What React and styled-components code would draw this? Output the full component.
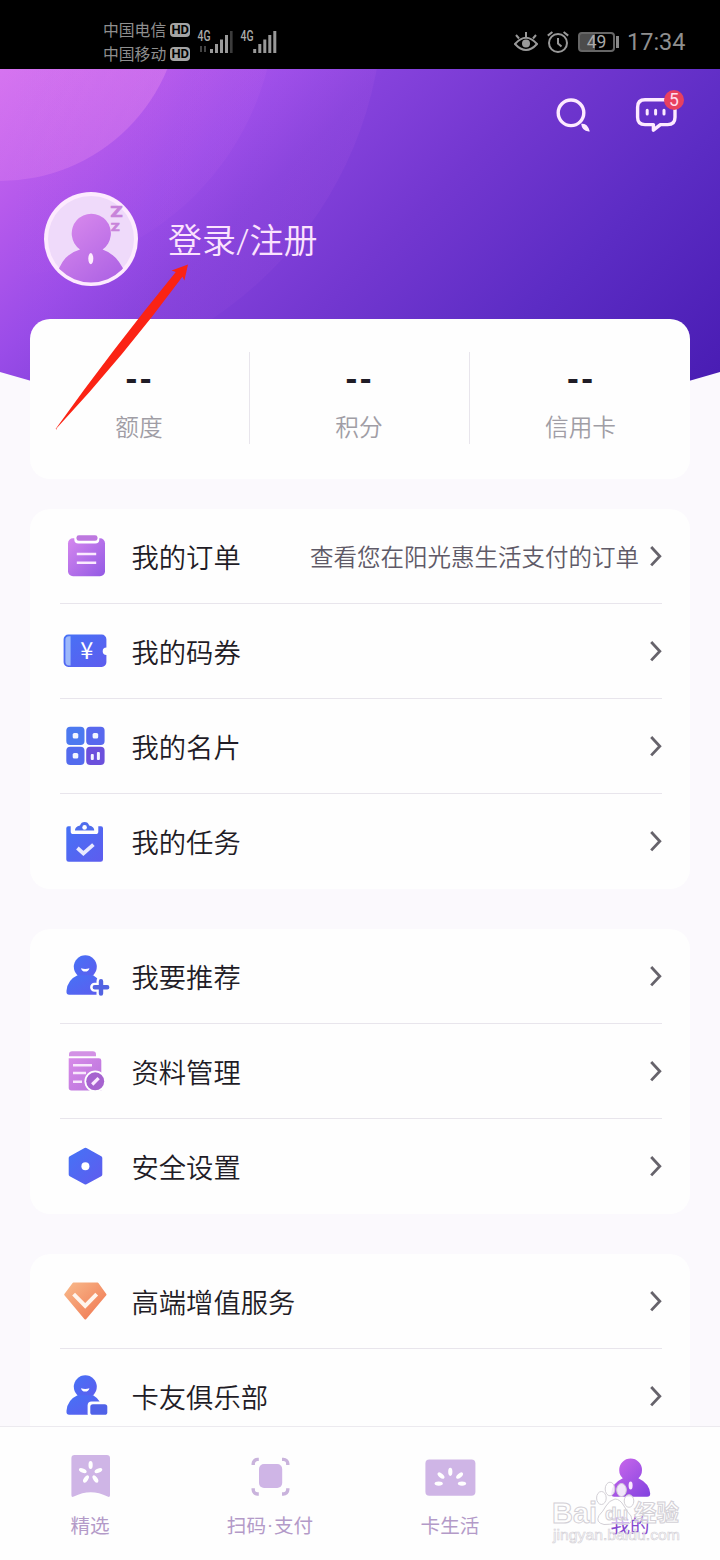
import React from 'react';
import styled, { createGlobalStyle } from 'styled-components';

const theme = {
  colors: {
    page: '#fbf9fd',
    surface: '#fefefe',
    text: '#1f1c26',
    textMuted: '#a09da5',
    textSoft: '#5f5a67',
    border: '#e8e5ec',
    tab: '#b39ac8',
    tabIcon: '#cfb5e6',
    tabActive: '#8548cf',
    status: '#8f8f8f',
    badge: '#e8405f'
  },
  fonts: {
    primary: '"Noto Sans CJK SC", sans-serif',
    latin: 'Roboto, "Noto Sans CJK SC", sans-serif'
  }
};

const GlobalStyle = createGlobalStyle`
  * {
    box-sizing: border-box;
  }

  body {
    margin: 0;
    background: ${theme.colors.page};
    font-family: ${theme.fonts.primary};
    font-weight: 350;
    color: ${theme.colors.text};
  }

  svg {
    display: block;
    flex: none;
  }
`;

const Screen = styled.div`
  position: relative;
  width: 720px;
  height: 1560px;
  overflow: hidden;
  display: flex;
  flex-direction: column;
  background: ${theme.colors.page};
`;

const StatusBar = styled.div`
  height: 69px;
  flex: none;
  background: #000;
  color: ${theme.colors.status};
  display: flex;
  align-items: center;
  justify-content: space-between;
  padding: 14px 35px 0 103px;
`;

const StatusGroup = styled.div`
  display: flex;
  align-items: center;
`;

const StatusIcons = styled.div`
  display: flex;
  align-items: center;
  gap: 9px;
`;

const Carriers = styled.div`
  display: flex;
  flex-direction: column;
  margin-right: 6px;
`;

const Carrier = styled.div`
  display: flex;
  align-items: center;
  gap: 4px;
  height: 24px;
  font-size: 15.8px;
  font-weight: 400;
  line-height: 24px;
  white-space: nowrap;
`;

const HdTag = styled.span`
  width: 20px;
  height: 14px;
  border-radius: 4px;
  background: #a4a4a4;
  color: #000;
  font-family: ${theme.fonts.latin};
  font-size: 13px;
  font-weight: 700;
  line-height: 14px;
  text-align: center;
`;

const Battery = styled.div`
  position: relative;
  width: 37px;
  height: 20px;
  margin: 0 12px 0 9px;
  border: 2px solid #666;
  border-radius: 4px;
  background: linear-gradient(90deg, #4c4c4c 0 45%, #000 45%);
  font-family: ${theme.fonts.latin};
  font-size: 17.5px;
  font-weight: 400;
  line-height: 17px;
  color: #aaa;
  text-align: center;

  &::after {
    content: '';
    position: absolute;
    right: -6px;
    top: 2px;
    width: 3px;
    height: 12px;
    background: #888;
  }
`;

const Clock = styled.span`
  width: 58px;
  padding-top: 1px;
  font-family: ${theme.fonts.latin};
  font-size: 23.5px;
  font-weight: 400;
  line-height: 28px;
  white-space: nowrap;
`;

const Header = styled.header`
  position: relative;
  height: 250px;
  flex: none;
  padding: 24px 36px 0 44px;
`;

const Backdrop = styled.svg`
  position: absolute;
  left: 0;
  top: 0;
`;

const Toolbar = styled.div`
  position: relative;
  display: flex;
  justify-content: flex-end;
  gap: 42px;
  height: 44px;
`;

const MessageButton = styled.div`
  position: relative;
  width: 50px;
`;

const Badge = styled.span`
  position: absolute;
  top: -3px;
  left: 30px;
  width: 20px;
  height: 20px;
  border-radius: 50%;
  background: ${theme.colors.badge};
  color: #fde;
  font-family: ${theme.fonts.latin};
  font-size: 17.5px;
  font-weight: 400;
  line-height: 21px;
  text-align: center;
`;

const Profile = styled.div`
  position: relative;
  display: flex;
  align-items: center;
  gap: 30px;
  margin-top: 55px;
  height: 94px;
`;

const LoginText = styled.div`
  padding-top: 4px;
  color: #fbe3fd;
  font-family: ${theme.fonts.latin};
  font-size: 34px;
  line-height: 50px;
`;

const StatsCard = styled.section`
  position: relative;
  display: grid;
  grid-template-columns: repeat(3, 1fr);
  height: 160px;
  flex: none;
  margin: 0 30px 30px;
  padding: 33px 0;
  border-radius: 20px;
  background: ${theme.colors.surface};
`;

const Stat = styled.div`
  display: flex;
  flex-direction: column;
  align-items: center;
  height: 92px;
  padding: 6px 2px 0 0;
  border-right: 1px solid ${theme.colors.border};

  &:last-child {
    border-right: 0;
    padding-right: 0;
  }
`;

const StatValue = styled.div`
  height: 36px;
  padding-left: 2px;
  font-size: 32px;
  font-weight: 900;
  line-height: 36px;
  letter-spacing: 2px;
`;

const StatLabel = styled.div`
  margin-top: 14px;
  padding-left: 1px;
  color: ${theme.colors.textMuted};
  font-size: 23.7px;
  line-height: 36px;
`;

const Menu = styled.section`
  flex: none;
  margin: 0 30px 40px;
  padding: 0 28px 0 30px;
  border-radius: 20px;
  background: ${theme.colors.surface};
`;

const MenuRow = styled.div`
  display: flex;
  align-items: center;
  height: 95px;
  border-bottom: 1px solid ${theme.colors.border};

  &:last-child {
    border-bottom-color: transparent;
  }
`;

const MenuLabel = styled.div`
  flex: 1;
  margin-left: 21.5px;
  padding-bottom: 1px;
  font-size: 27.3px;
  line-height: 40px;
  white-space: nowrap;
`;

const MenuHint = styled.div`
  margin-right: 11px;
  color: ${theme.colors.textSoft};
  font-size: 23.5px;
  line-height: 36px;
  white-space: nowrap;
`;

const TabBar = styled.nav`
  position: absolute;
  left: 0;
  right: 0;
  bottom: 0;
  height: 134px;
  display: grid;
  grid-template-columns: repeat(4, 1fr);
  padding-top: 19px;
  border-top: 1px solid #eceaef;
  background: ${theme.colors.surface};
`;

const Tab = styled.div`
  display: flex;
  flex-direction: column;
  align-items: center;
  gap: 6px;
  color: ${props => (props.$active ? theme.colors.tabActive : theme.colors.tab)};
  font-family: ${theme.fonts.latin};
  font-size: 19.6px;
  font-weight: 400;
  line-height: 30px;
`;

const TabDot = styled.span`
  display: inline-block;
  width: 8px;
  text-align: center;
`;

const Arrow = styled.svg`
  position: absolute;
  left: 50px;
  top: 258px;
`;

const Watermark = styled.svg`
  position: absolute;
  left: 545px;
  top: 1475px;
`;

const HiddenDefs = styled.svg`
  position: absolute;
`;

const Gradients = () => (
  <HiddenDefs width="0" height="0">
    <defs>
      <linearGradient id="violet" x1="0" y1="0" x2="1" y2="1">
        <stop offset="0" stopColor="#d587ee" />
        <stop offset="1" stopColor="#9359e4" />
      </linearGradient>
      <linearGradient id="profile" x1="0" y1="0" x2="1" y2="1">
        <stop offset="0" stopColor="#d78ae8" />
        <stop offset="1" stopColor="#b873dc" />
      </linearGradient>
      <linearGradient id="indigo" x1="0" y1="0" x2="1" y2="1">
        <stop offset="0" stopColor="#4672f6" />
        <stop offset="1" stopColor="#5e5cee" />
      </linearGradient>
      <linearGradient id="orange" x1="0" y1="0" x2="1" y2="1">
        <stop offset="0" stopColor="#f8b98a" />
        <stop offset="1" stopColor="#f0744f" />
      </linearGradient>
      <linearGradient id="active" x1="0" y1="0" x2="1" y2="1">
        <stop offset="0" stopColor="#cf6aec" />
        <stop offset="1" stopColor="#8142df" />
      </linearGradient>
    </defs>
  </HiddenDefs>
);

const OrderIcon = () => (
  <>
    <rect x="8" y="7.3" width="37" height="38" rx="5" fill="url(#violet)" />
    <path d="M14.3 5v3.5a4 4 0 0 0 4 4h17a4 4 0 0 0 4-4V5z" fill="#fff" />
    <rect x="16.5" y="4.2" width="21" height="5.6" rx="2.4" fill="#bd78df" />
    <path d="M16.8 23h19.4M16.8 31.8h19.4" stroke="#fbeaff" strokeWidth="2.6" />
  </>
);

const CouponIcon = () => (
  <>
    <path
      d="M8.3 8.5h33.4a4.7 4.7 0 0 1 4.7 4.7v8.3a3.7 3.7 0 0 0 0 7.4v7.4a4.7 4.7 0 0 1-4.7 4.7H8.3a4.7 4.7 0 0 1-4.7-4.7V13.2a4.7 4.7 0 0 1 4.7-4.7z"
      fill="url(#indigo)"
    />
    <path d="M10.6 10.2v29.2H9a3.6 3.6 0 0 1-3.6-3.6V13.8A3.6 3.6 0 0 1 9 10.2z" fill="#9db8fa" />
    <text x="26.8" y="33.2" fontFamily="Noto Sans CJK SC" fontSize="23.5" fontWeight="400" textAnchor="middle" fill="#fff">
      ¥
    </text>
  </>
);

const CardIcon = () => (
  <>
    <rect x="6.3" y="5.8" width="18.2" height="18.2" rx="4" fill="#4c79f0" />
    <rect x="26.2" y="5.8" width="18.4" height="18.2" rx="4" fill="#5868ee" />
    <rect x="6.3" y="25.7" width="18.2" height="18.2" rx="4" fill="#536bee" />
    <rect x="26.2" y="25.7" width="18.4" height="18.2" rx="4" fill="#6b50dc" />
    <g fill="#f3f5ff">
      <rect x="12.7" y="12" width="5.6" height="5.6" rx="1.6" />
      <rect x="32.6" y="12" width="5.6" height="5.6" rx="1.6" />
      <rect x="12.7" y="32" width="5.6" height="5.6" rx="1.6" />
      <rect x="30.8" y="33" width="3" height="6" rx="1" />
      <rect x="36.9" y="31" width="3" height="8" rx="1" />
    </g>
  </>
);

const TaskIcon = () => (
  <>
    <path
      d="M6.3 12.2q0-2 2-2h2.4v5.2q0 2.6 2.6 2.6h22.4q2.6 0 2.6-2.6v-5.2h2.7q2 0 2 2v31.2q0 2.4-2.4 2.4H8.7q-2.4 0-2.4-2.4z"
      fill="url(#indigo)"
    />
    <path d="M15 14.6q-.4-3.8 5-5.2 1.2-3.4 4.6-3.4t4.6 3.4q5.4 1.4 5 5.2z" fill="#4f6ded" />
    <circle cx="24.6" cy="11.4" r="2.3" fill="#fff" />
    <path d="M17.4 32l6 5.4 10-8.8" fill="none" stroke="#e8e9ff" strokeWidth="3.8" />
  </>
);

const Person = () => (
  <>
    <circle cx="25.3" cy="15.8" r="11.5" fill="url(#indigo)" />
    <path d="M17.5 24.2h15.6q8 4.6 8.6 14 0 5.6-3 5.6H9.3q-3.3 0-2.8-4 .8-11 11-15.6z" fill="url(#indigo)" />
    <path d="M21 17.2q4.2 1.4 8.4 0-.8 3.4-4.2 3.4t-4.2-3.4z" fill="#fff" />
  </>
);

const ReferIcon = () => (
  <>
    <Person />
    <path d="M41 30v17M34.6 36.3h14" stroke="#fefefe" strokeWidth="9" strokeLinecap="round" />
    <path d="M41 30.2v12.4M34.8 36.3h12.4" stroke="#5263e2" strokeWidth="4.4" strokeLinecap="round" />
  </>
);

const ProfileIcon = () => (
  <>
    <path d="M9 10.2V8.4a3.2 3.2 0 0 1 3.2-3.2h20.6a3.2 3.2 0 0 1 3.2 3.2v1.8z" fill="#d391e5" />
    <path d="M8.7 12.2h30.2a2.4 2.4 0 0 1 2.4 2.4v29.9H11.4a2.7 2.7 0 0 1-2.7-2.7z" fill="url(#profile)" />
    <path d="M13 19.3h19M13 27h13M13 35.8h9" stroke="#f8e6fc" strokeWidth="2.6" />
    <circle cx="35.2" cy="35.3" r="10.8" fill="#fefefe" />
    <circle cx="35.2" cy="35.3" r="9" fill="#a663cf" />
    <path d="M32.2 38.5l6.4-6.4" stroke="#fbe9ff" strokeWidth="3.2" />
  </>
);

const SecurityIcon = () => (
  <>
    <path
      d="M25.5 8.8l14.8 8.1v16.6l-14.8 8.1-14.8-8.1V16.9z"
      fill="url(#indigo)"
      stroke="url(#indigo)"
      strokeWidth="4"
      strokeLinejoin="round"
    />
    <circle cx="25.4" cy="25.2" r="4" fill="#fff" />
  </>
);

const DiamondIcon = () => (
  <>
    <path
      d="M13.4 7.6h24.2l7.9 10.9-20.2 24L5.2 18.5z"
      fill="url(#orange)"
      stroke="url(#orange)"
      strokeWidth="2"
      strokeLinejoin="round"
    />
    <path d="M13.6 18.2l11.6 11.6 11.5-11.6" fill="none" stroke="#fff4ec" strokeWidth="4" />
  </>
);

const ClubIcon = () => (
  <>
    <Person />
    <rect x="27.6" y="30.5" width="22" height="16" rx="4" fill="#fefefe" />
    <rect x="30.3" y="33.2" width="17" height="10.6" rx="2.6" fill="#5062e8" />
  </>
);

const Petal = ({ x, y, rotate = 0 }) => (
  <ellipse cx={x} cy={y} rx="2.1" ry="4.1" fill="#fff" transform={`rotate(${rotate} ${x} ${y})`} />
);

const FeaturedIcon = () => (
  <>
    <path
      d="M14.6 9h32.2a3.2 3.2 0 0 1 3.2 3.2v37q0 2.4-2.4 1.4Q39 46.2 30.7 46.2T13.8 50.6q-2.4 1-2.4-1.4v-37A3.2 3.2 0 0 1 14.6 9z"
      fill={theme.colors.tabIcon}
    />
    <Petal x={30.6} y={19} />
    <Petal x={22.8} y={24.6} rotate={-66} />
    <Petal x={38.4} y={24.6} rotate={66} />
    <Petal x={26} y={33} rotate={34} />
    <Petal x={35.4} y={33} rotate={-34} />
  </>
);

const ScanIcon = () => (
  <>
    <rect x="19" y="18" width="23.2" height="24" rx="5" fill={theme.colors.tabIcon} />
    <path
      d="M13.2 19v-1.2a4.4 4.4 0 0 1 4.4-4.4h1.2M42 13.4h1.4a4.4 4.4 0 0 1 4.4 4.4V19M47.8 42.2v1.4a4.4 4.4 0 0 1-4.4 4.4H42M18.8 48h-1.2a4.4 4.4 0 0 1-4.4-4.4v-1.4"
      fill="none"
      stroke="#c9b3dc"
      strokeWidth="3.4"
    />
  </>
);

const LifeIcon = () => (
  <>
    <rect x="5.4" y="13.6" width="50" height="36.2" rx="4" fill={theme.colors.tabIcon} />
    <Petal x={18.7} y={37.6} rotate={90} />
    <Petal x={21} y={29.6} rotate={-50} />
    <Petal x={30.3} y={25.8} />
    <Petal x={39.6} y={29.6} rotate={50} />
    <Petal x={42} y={37.6} rotate={90} />
  </>
);

const MineIcon = () => (
  <>
    <path
      d="M11.2 47.5q.4-10 11.6-15.2a11.4 11.4 0 1 1 15.6 0q11 5.2 11.8 15.2 0 3.2-3 3.2h-33q-3 0-3-3.2z"
      fill="url(#active)"
    />
    <ellipse cx="30.6" cy="39.4" rx="2" ry="4" fill="#fbe9ff" />
  </>
);

const SignalIcon = () => (
  <svg width="82" height="34" viewBox="196 24 82 34">
    <g fontFamily="Roboto" fontSize="14" fontWeight="500" fill="#aaa">
      <text x="197.5" y="40" textLength="13" lengthAdjust="spacingAndGlyphs">4G</text>
      <text x="240.5" y="40" textLength="13" lengthAdjust="spacingAndGlyphs">4G</text>
    </g>
    <path d="M201 45v6M205 45v6" stroke="#555" strokeWidth="1.6" />
    <g stroke="#999" strokeWidth="3">
      <path d="M211.5 52v-4M216.5 52v-9M221.5 52v-13.5M226.5 52v-18" />
      <path d="M254.7 52v-4M259.8 52v-9M264.8 52v-13.5M269.8 52v-18M274.8 52v-22" />
    </g>
    <path d="M231.3 52V30" stroke="#3c3c3c" strokeWidth="2.6" />
  </svg>
);

const EyeIcon = () => (
  <svg width="24" height="24" viewBox="0 0 24 24" fill="none" stroke="#999" strokeWidth="2">
    <path d="M1 14q11-12.5 22 0-11 12-22 0z" />
    <path d="M12 7V2M5 8.5L2 5M19 8.5L22 5" />
    <circle cx="12" cy="13.4" r="4" fill="#999" stroke="none" />
  </svg>
);

const AlarmIcon = () => (
  <svg width="22" height="24" viewBox="0 0 22 24" fill="none" stroke="#999" strokeWidth="2">
    <circle cx="11" cy="13" r="9" />
    <path d="M11 8v5.5l3.5 3M.8 5.6L5.4 2M21.2 5.6L16.6 2" />
  </svg>
);

const SearchIcon = () => (
  <svg width="40" height="44" viewBox="552 93 40 44">
    <circle cx="571" cy="112.8" r="12.8" fill="none" stroke="#fdeaff" strokeWidth="3.4" />
    <path d="M582 124.4q4.8-.6 6.8 6.4-6.2-.6-6.8-6.4z" fill="#fdeaff" stroke="#fdeaff" strokeWidth="1.4" />
  </svg>
);

const MessageIcon = () => (
  <svg width="50" height="44" viewBox="634 93 50 44">
    <path
      d="M645 99.8h22.6q7.4 0 7.4 7.4v10q0 7.4-7.4 7.4h-7.2l-7 5.6v-5.6H645q-7.4 0-7.4-7.4v-10q0-7.4 7.4-7.4z"
      fill="none"
      stroke="#fdeaff"
      strokeWidth="3.4"
      strokeLinejoin="round"
    />
    <path
      d="M647.2 110.3v3.6M655.6 110.3v3.6M664 110.3v3.6"
      stroke="#fdeaff"
      strokeWidth="3"
      strokeLinecap="round"
    />
  </svg>
);

const Chevron = () => (
  <svg width="12" height="22" viewBox="0 0 12 22">
    <path d="M1.2 2l8.6 9.2-8.6 9.2" fill="none" stroke="#66636b" strokeWidth="2.8" />
  </svg>
);

const Avatar = () => (
  <svg width="94" height="94" viewBox="44 192 94 94">
    <defs>
      <clipPath id="face">
        <circle cx="91" cy="239" r="43.5" />
      </clipPath>
      <linearGradient id="body" x1="0" y1="0" x2=".7" y2="1">
        <stop offset="0" stopColor="#dc8ced" />
        <stop offset="1" stopColor="#ad62e4" />
      </linearGradient>
    </defs>
    <circle cx="91" cy="239" r="47" fill="#fdebfe" />
    <circle cx="91" cy="239" r="43" fill="#efdafa" />
    <g clipPath="url(#face)">
      <path d="M57 290v-16q6-20 23-24.6a19.6 19.6 0 1 1 22.6 0q15 5 23 24.6v16z" fill="url(#body)" />
    </g>
    <ellipse cx="90.8" cy="258.6" rx="2.5" ry="5.6" fill="#fdebfe" />
    <g fontFamily="Roboto" fontWeight="900" fill="#c884da" stroke="#c884da" strokeWidth=".6">
      <text x="110.6" y="217.3" fontSize="15.5" textLength="12" lengthAdjust="spacingAndGlyphs">Z</text>
      <text x="111" y="230.5" fontSize="11" textLength="8.5" lengthAdjust="spacingAndGlyphs">Z</text>
    </g>
  </svg>
);

const menus = [
  [
    { label: '我的订单', hint: '查看您在阳光惠生活支付的订单', Icon: OrderIcon },
    { label: '我的码券', Icon: CouponIcon },
    { label: '我的名片', Icon: CardIcon },
    { label: '我的任务', Icon: TaskIcon }
  ],
  [
    { label: '我要推荐', Icon: ReferIcon },
    { label: '资料管理', Icon: ProfileIcon },
    { label: '安全设置', Icon: SecurityIcon }
  ],
  [
    { label: '高端增值服务', Icon: DiamondIcon },
    { label: '卡友俱乐部', Icon: ClubIcon }
  ]
];

const tabs = [
  { label: '精选', Icon: FeaturedIcon },
  { label: <span>扫码<TabDot>·</TabDot>支付</span>, Icon: ScanIcon },
  { label: '卡生活', Icon: LifeIcon },
  { label: '我的', Icon: MineIcon, active: true }
];

const App = () => (
  <Screen>
    <GlobalStyle />
    <Gradients />

    <StatusBar>
      <StatusGroup>
        <Carriers>
          <Carrier>中国电信<HdTag>HD</HdTag></Carrier>
          <Carrier>中国移动<HdTag>HD</HdTag></Carrier>
        </Carriers>
        <SignalIcon />
      </StatusGroup>
      <StatusGroup>
        <StatusIcons>
          <EyeIcon />
          <AlarmIcon />
        </StatusIcons>
        <Battery>49</Battery>
        <Clock>17:34</Clock>
      </StatusGroup>
    </StatusBar>

    <Header>
      <Backdrop width="720" height="360" viewBox="0 69 720 360">
        <defs>
          <linearGradient id="sky" gradientUnits="userSpaceOnUse" x1="0" y1="69" x2="510" y2="579">
            <stop offset="0" stopColor="#cd6af0" />
            <stop offset=".14" stopColor="#b65aec" />
            <stop offset=".28" stopColor="#9a4ce8" />
            <stop offset=".38" stopColor="#8642dc" />
            <stop offset=".55" stopColor="#7337d0" />
            <stop offset=".76" stopColor="#5c2cc4" />
            <stop offset="1" stopColor="#4a1db4" />
          </linearGradient>
          <linearGradient id="ring" x1="0.5" y1="0" x2="1" y2="0">
            <stop offset="0" stopColor="#ff8cf4" stopOpacity="0" />
            <stop offset="1" stopColor="#ff8cf4" stopOpacity=".06" />
          </linearGradient>
          <linearGradient id="glow" x1="0.5" y1="0" x2="1" y2="0">
            <stop offset="0" stopColor="#ffa0f0" stopOpacity=".18" />
            <stop offset="1" stopColor="#ffa0f0" stopOpacity=".28" />
          </linearGradient>
          <clipPath id="curve">
            <path d="M0 69h720v303Q360 480 0 372z" />
          </clipPath>
        </defs>
        <g clipPath="url(#curve)">
          <rect x="0" y="69" width="720" height="360" fill="url(#sky)" />
          <circle r="383" fill="url(#ring)" />
          <circle r="276" fill="url(#ring)" />
          <circle r="181" fill="url(#glow)" />
        </g>
      </Backdrop>
      <Toolbar>
        <SearchIcon />
        <MessageButton>
          <MessageIcon />
          <Badge>5</Badge>
        </MessageButton>
      </Toolbar>
      <Profile>
        <Avatar />
        <LoginText>登录/注册</LoginText>
      </Profile>
    </Header>

    <StatsCard>
      {['额度', '积分', '信用卡'].map(label => (
        <Stat key={label}>
          <StatValue>--</StatValue>
          <StatLabel>{label}</StatLabel>
        </Stat>
      ))}
    </StatsCard>

    {menus.map((rows, index) => (
      <Menu key={index}>
        {rows.map(({ label, hint, Icon }) => (
          <MenuRow key={label}>
            <svg width="50" height="50" viewBox="0 0 50 50">
              <Icon />
            </svg>
            <MenuLabel>{label}</MenuLabel>
            {hint && <MenuHint>{hint}</MenuHint>}
            <Chevron />
          </MenuRow>
        ))}
      </Menu>
    ))}

    <TabBar>
      {tabs.map(({ label, Icon, active }, index) => (
        <Tab key={index} $active={active}>
          <svg width="60" height="60" viewBox="0 0 60 60">
            <Icon />
          </svg>
          {label}
        </Tab>
      ))}
    </TabBar>

    <Arrow width="150" height="180" viewBox="50 258 150 180">
      <path
        d="M188 264.5L171.6 270.4l4.2 1.6Q112 350 55.6 429q2 1 .8-.4Q124 356 182.4 276.8l2 3.8z"
        fill="#fb2314"
      />
    </Arrow>

    <Watermark width="145" height="75" viewBox="545 1475 145 75">
      <g fill="#fff" fillOpacity=".6" stroke="#d3d0d6" strokeWidth="1">
        <ellipse cx="601.4" cy="1498" rx="4.8" ry="6.5" fillOpacity=".85" />
        <ellipse cx="610" cy="1489" rx="4.8" ry="6.8" fillOpacity=".85" />
        <ellipse cx="621.5" cy="1490" rx="4.8" ry="6.5" fillOpacity=".85" />
        <ellipse cx="629" cy="1501" rx="4.8" ry="6.3" fillOpacity=".85" />
        <path d="M615 1499q5 0 9 7t7 10q3 8-6 8.5-5 0-10-1-5 1-11 1-9-2-5-9 4-4 7-9.5t9-7z" />
        <g fontFamily="Liberation Sans" fontWeight="700">
          <text x="552" y="1523" fontSize="30" textLength="45" lengthAdjust="spacingAndGlyphs">Bai</text>
          <text x="605" y="1520" fontSize="19">du</text>
        </g>
        <text x="634" y="1521" fontFamily="Noto Sans CJK SC" fontSize="22.5" fontWeight="700">经验</text>
        <text
          x="553"
          y="1540"
          fontFamily="Liberation Sans"
          fontSize="15"
          strokeWidth=".6"
          textLength="127"
          lengthAdjust="spacingAndGlyphs"
        >
          jingyan.baidu.com
        </text>
      </g>
    </Watermark>
  </Screen>
);

export default App;
